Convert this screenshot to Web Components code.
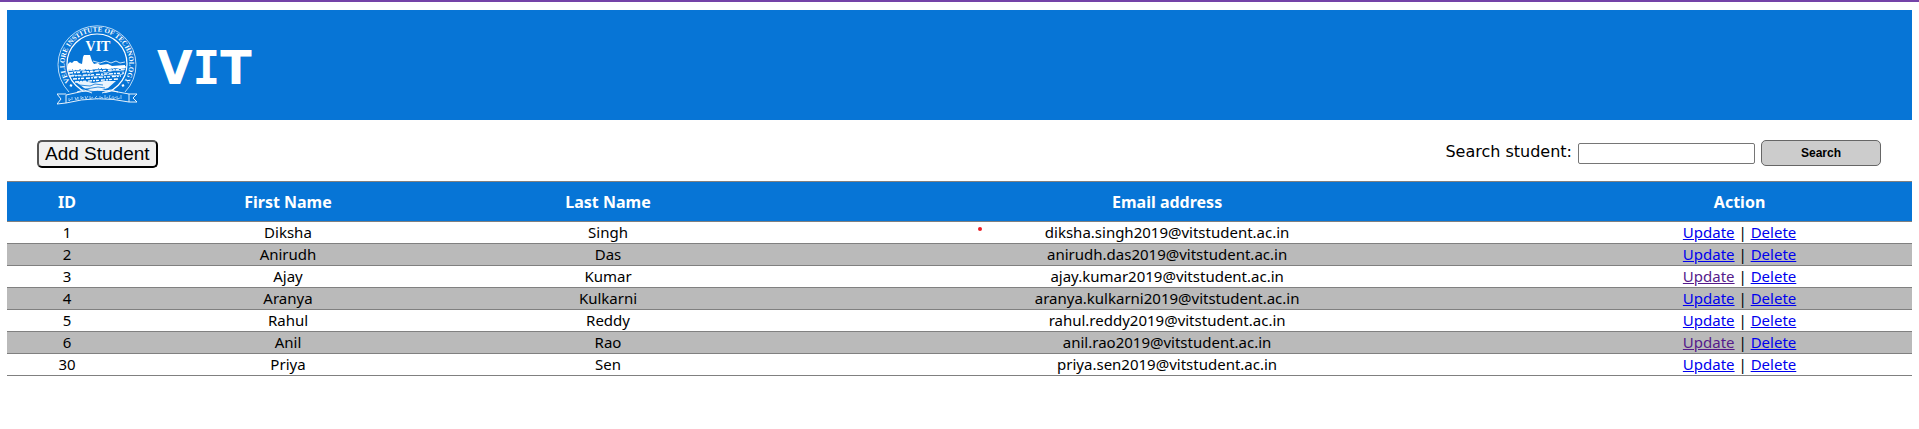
<!DOCTYPE html>
<html lang="en">
<head>
<meta charset="utf-8">
<title>Student Tracker</title>
<style>
  body { margin: 0; background: #fff; font-family: "Noto Sans", Tahoma, sans-serif; }
</style>
</head>
<body>
<student-app></student-app>

<template id="t-app">
  <style>
    :host { display: block; border-top: 2px solid #7443a8; }
    main { padding: 8px 7px; }
  </style>
  <main>
    <page-header><vit-logo></vit-logo></page-header>
    <tool-bar></tool-bar>
    <student-table></student-table>
  </main>
</template>

<template id="t-header">
  <style>
    :host { display: block; background: #0775d6; color: #fff; }
    header { display: flex; align-items: center; gap: 20px; padding: 15px 50px; }
    h1 { margin: 0; padding-top: 6px; font: bold 46px/64px "DejaVu Sans", Verdana, sans-serif; }
    .slab { font-family: "DejaVu Sans Mono", monospace; }
  </style>
  <header><slot></slot><h1>V<span class="slab">I</span>T</h1></header>
</template>

<template id="t-logo">
  <style>
    :host { display: block; }
    svg { display: block; width: 80px; height: 80px; }
    text { fill: #fff; font-family: "Liberation Serif", serif; font-weight: bold; }
  </style>
  <svg viewBox="0 0 80 80" role="img" aria-label="Vellore Institute of Technology" fill="none" stroke="#fff">
    <defs><path id="ring" d="M13.400 57.300A32.300 32.300 0 1 1 66.600 57.300"/></defs>
    <path d="M12 67A39 39 0 1 1 68 67" stroke-width="1" stroke="#b9dcf8"/>
    <circle cx="40" cy="39" r="30" stroke-width="1.200"/>
    <text font-size="7" stroke="none"><textPath href="#ring" startOffset="50%" text-anchor="middle">VELLORE INSTITUTE OF TECHNOLOGY</textPath></text>
    <text x="41" y="26" font-size="14" text-anchor="middle" stroke="none">VIT</text>
    <path d="M11 39l2-2 2 1 2-2h3l2 2 3 1 1-7 1-2h6l2 6 2 3 4-1 2 2 8-1 4 2 13-1v3l-5 1-4-1-8 1-8-1-9 2-8-1-7 1-6-1-3 1z" fill="#fff" stroke="none"/>
    <path d="M36 36l7 2 6-2 5 2 5-2 4 2 5-1" stroke-width=".8"/>
    <path d="M11 45l58-3M12 48l57-4M13 51l54-3M16 54l48-3M18 57l43-3" stroke-width="1.400" stroke-dasharray="4 1 2 1 3 2"/>
    <path d="M12 45l9 2 4-2 8 3 9-3 7 3 8-3 10 1M15 50l11 1 6-1 9 2 9-3 8 2 8-2" stroke-width=".8" stroke="#d4e9fb"/>
    <path d="M19 57l9-1 8 2 11-2 12 0-8 7-12 4-12-4z" fill="#eaf4fd" stroke="none"/>
    <path d="M22 60l11 1 5-2 8 1M29 64l12-2 7 1" stroke="#0775d6" stroke-width=".8"/>
    <path d="M13 60l2 1M65 61l2-1" stroke-width="2.500"/>
    <path d="M9 70Q40 61 72 69V77Q40 70 9 78zM9 69H0l4 5-4 5 9-1M72 69h8l-4 4 4 4-8 0M20 67l7-2 8 3M61 67l-8-2-8 3" stroke-width=".9" fill="#0775d6"/>
    <path d="M12 73v3l2-2m1-2v3m3-3l1 3 2-3v3m3-4v3l2-2v2m2-3l1 3 2-3m2 0v3l3-2m4-1l-2 2 3 1m2-3v3l2-2 1 2m2-4v4l3-2m2-2l-1 4 3-1m1-2v3l3-2m1-1v3l3-1m1-3v4" stroke-width=".8" stroke="#b9dcf8"/>
  </svg>
</template>

<template id="t-tools">
  <style>
    :host { display: block; }
    .bar { display: flex; align-items: flex-start; justify-content: space-between; padding: 20px 31px 13px 30px; }
    button { box-sizing: border-box; font-family: "Liberation Sans", Arial, sans-serif; color: #000; }
    .add { height: 28px; padding: 0 6px; font-size: 19px; line-height: 20px; background: #f0f0f0; border: 2px outset #000; border-radius: 5px; }
    form { display: flex; align-items: center; gap: 6px; }
    label { padding-bottom: 2px; font: 16px/20px "DejaVu Sans", Verdana, sans-serif; }
    input { box-sizing: border-box; width: 177px; height: 21px; margin: 0; padding: 1px 2px; border: 1px solid #767676; border-radius: 2px; background: #fff; font: 13px "Liberation Sans", Arial, sans-serif; }
    .go { width: 120px; height: 26px; padding: 0; font-size: 12px; font-weight: bold; background: #ccc; border: 1px solid #666; border-radius: 5px; }
  </style>
  <div class="bar">
    <button class="add" type="button">Add Student</button>
    <form>
      <label for="q">Search student:</label>
      <input id="q" type="text" name="q">
      <button class="go" type="button">Search</button>
    </form>
  </div>
</template>

<template id="t-table">
  <style>
    :host { display: block; }
    table { width: 100%; table-layout: fixed; border-collapse: collapse; text-align: center; }
    .c-id { width: 6.3%; } .c-first { width: 16.9%; } .c-last { width: 16.7%; } .c-mail { width: 42%; }
    th, td { padding: 0; border-top: 1px solid #808080; border-bottom: 1px solid #808080; }
    th { height: 39px; font-size: 16px; line-height: 20px; color: #fff; background: #0775d6; }
    td { padding-bottom: 1px; font-size: 15px; line-height: 20px; color: #000; }
    tbody tr:nth-child(even) { background: #bababa; }
    a { color: #00e; text-decoration: underline; }
    a.seen { color: #551a8b; }
    .marked { position: relative; }
    .dot { position: absolute; left: 211px; top: 5px; width: 4px; height: 4px; border-radius: 50%; background: #ed1c24; }
  </style>
  <table>
    <colgroup><col class="c-id"><col class="c-first"><col class="c-last"><col class="c-mail"><col></colgroup>
    <thead><tr><th>ID</th><th>First Name</th><th>Last Name</th><th>Email address</th><th>Action</th></tr></thead>
    <tbody></tbody>
  </table>
</template>

<script>
  const define = (name, templateId, setup) => customElements.define(name, class extends HTMLElement {
    constructor() {
      super();
      this.attachShadow({ mode: "open" })
        .append(document.importNode(document.getElementById(templateId).content, true));
      if (setup) setup(this.shadowRoot);
    }
  });

  const students = [
    { id: 1, first: "Diksha", last: "Singh", mail: "diksha.singh2019", marked: true },
    { id: 2, first: "Anirudh", last: "Das", mail: "anirudh.das2019" },
    { id: 3, first: "Ajay", last: "Kumar", mail: "ajay.kumar2019", seen: true },
    { id: 4, first: "Aranya", last: "Kulkarni", mail: "aranya.kulkarni2019" },
    { id: 5, first: "Rahul", last: "Reddy", mail: "rahul.reddy2019" },
    { id: 6, first: "Anil", last: "Rao", mail: "anil.rao2019", seen: true },
    { id: 30, first: "Priya", last: "Sen", mail: "priya.sen2019" }
  ];

  define("vit-logo", "t-logo");
  define("page-header", "t-header");
  define("tool-bar", "t-tools");
  define("student-table", "t-table", root => {
    root.querySelector("tbody").innerHTML = students.map(s => `<tr>
      <td>${s.id}</td><td>${s.first}</td><td>${s.last}</td>
      <td${s.marked ? ' class="marked"' : ""}>${s.mail}@vitstudent.ac.in${s.marked ? '<span class="dot"></span>' : ""}</td>
      <td><a href="#update-${s.id}"${s.seen ? ' class="seen"' : ""}>Update</a> | <a href="#delete-${s.id}">Delete</a></td>
    </tr>`).join("");
  });
  define("student-app", "t-app");
</script>
</body>
</html>
